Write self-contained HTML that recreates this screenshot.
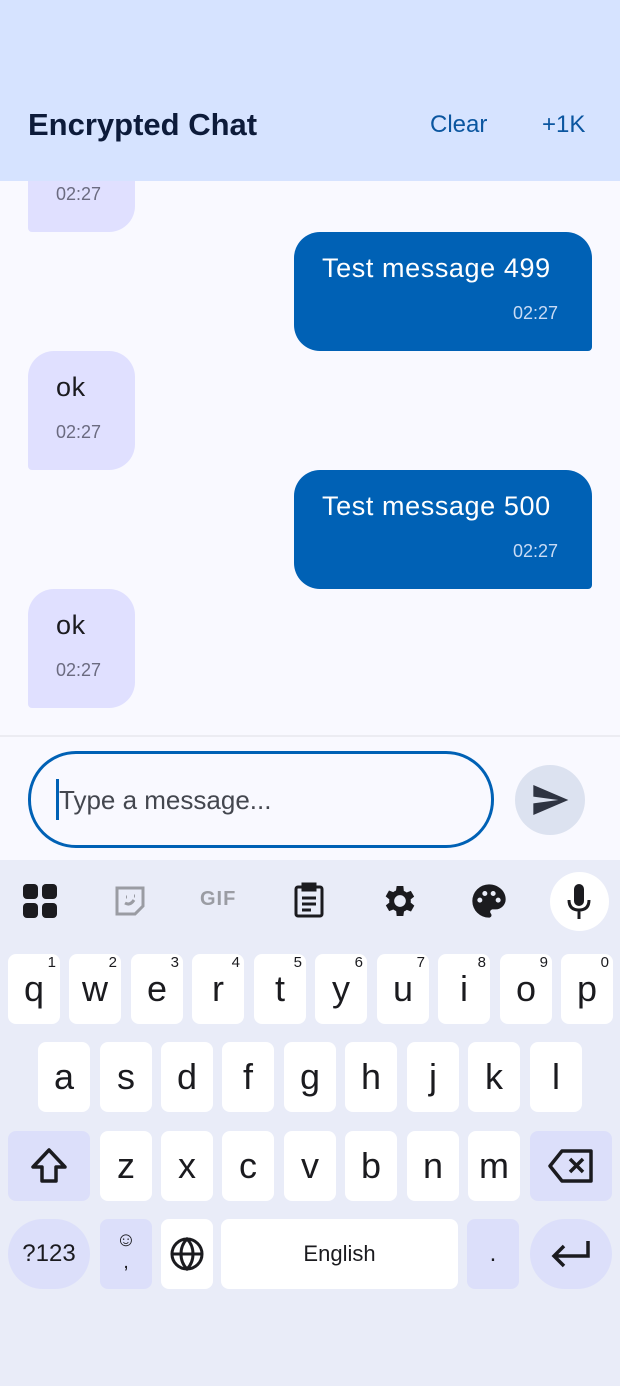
<!DOCTYPE html>
<html><head><meta charset="utf-8"><style>
*{margin:0;padding:0;box-sizing:border-box}
body{width:620px;height:1386px;position:relative;overflow:hidden;background:#f9f9ff;font-family:"Liberation Sans","DejaVu Sans",sans-serif}
.a{position:absolute}
.rb{background:#e0e0ff;border-radius:26px 26px 26px 4px;left:28px;width:107px;height:119px}
.sb{background:#0061b5;border-radius:26px 26px 4px 26px;left:294px;width:298px;height:119px;color:#fff}
.tm{font-size:18px;color:#6b6b80}
.kb{left:0;top:860px;width:620px;height:526px;background:#e9ecf8}
.k{position:absolute;background:#fff;border-radius:8px;height:70px;font-size:36px;color:#1b1b1f;text-align:center;line-height:70px}
.k sup{position:absolute;right:4px;top:-26px;font-size:15px}
.d{background:#dcdffa}
.msg{font-size:27px;letter-spacing:0.6px}
</style></head><body>
<div class="a rb" style="top:113px"></div>
<div class="a tm" style="left:56px;top:184px">02:27</div>
<div class="a" style="left:0;top:0;width:620px;height:181px;background:#d6e3ff"></div>
<div class="a" style="left:28px;top:107px;font-size:31px;font-weight:bold;color:#0d1b3a">Encrypted Chat</div>
<div class="a" style="left:430px;top:111px;font-size:24px;color:#0b56a0">Clear</div>
<div class="a" style="left:542px;top:111px;font-size:24px;color:#0b56a0">+1K</div>

<div class="a sb" style="top:232px"></div>
<div class="a msg" style="left:322px;top:253px;color:#fff">Test message 499</div>
<div class="a" style="left:513px;top:303px;font-size:18px;color:#c8dbf5">02:27</div>
<div class="a rb" style="top:351px"></div>
<div class="a msg" style="left:56px;top:372px;color:#1b1b1f">ok</div>
<div class="a tm" style="left:56px;top:422px">02:27</div>
<div class="a sb" style="top:470px"></div>
<div class="a msg" style="left:322px;top:491px;color:#fff">Test message 500</div>
<div class="a" style="left:513px;top:541px;font-size:18px;color:#c8dbf5">02:27</div>
<div class="a rb" style="top:589px"></div>
<div class="a msg" style="left:56px;top:610px;color:#1b1b1f">ok</div>
<div class="a tm" style="left:56px;top:660px">02:27</div>

<div class="a" style="left:0;top:735px;width:620px;height:125px;background:#f9f9ff;border-top:2px solid #ececf2"></div>
<div class="a" style="left:28px;top:751px;width:466px;height:97px;border:3px solid #0061b5;border-radius:48px"></div>
<div class="a" style="left:56px;top:779px;width:3px;height:41px;background:#0061b5"></div>
<div class="a" style="left:59px;top:785px;font-size:26px;color:#44474f">Type a message...</div>
<div class="a" style="left:515px;top:765px;width:70px;height:70px;border-radius:50%;background:#dce2f0"></div>
<svg class="a" style="left:530px;top:780px" width="40" height="40" viewBox="0 0 24 24"><path d="M2 21l21-9L2 3v7l15 2-15 2z" fill="#2f3442"/></svg>

<div class="a kb"></div>
<svg class="a" style="left:22px;top:883px" width="36" height="36" viewBox="0 0 36 36" fill="#1b1b1f"><rect x="1" y="1" width="15" height="15" rx="4"/><rect x="20" y="1" width="15" height="15" rx="4"/><rect x="1" y="20" width="15" height="15" rx="4"/><rect x="20" y="20" width="15" height="15" rx="4"/></svg>
<svg class="a" style="left:114px;top:885px" width="32" height="32" viewBox="0 0 32 32" fill="none" stroke="#9a9ca3" stroke-width="3"><path d="M3 3h26v18l-8 8H3z"/><path d="M11 18q5 3 9-3M12 12h1M20 11h1"/></svg>
<div class="a" style="left:200px;top:888px;font-size:20px;font-weight:bold;color:#9a9ca3;letter-spacing:1px">GIF</div>
<svg class="a" style="left:293px;top:882px" width="32" height="36" viewBox="0 0 32 36" fill="none" stroke="#1b1b1f" stroke-width="3"><rect x="3" y="5" width="26" height="29" rx="2"/><rect x="10" y="2" width="12" height="6" fill="#1b1b1f"/><path d="M9 16h14M9 22h14M9 28h9"/></svg>
<svg class="a" style="left:380px;top:881px" width="40" height="40" viewBox="0 0 24 24"><path fill="#1b1b1f" d="M19.4 13a7.5 7.5 0 000-2l2.1-1.6-2-3.5-2.5 1a7 7 0 00-1.7-1L15 3h-4l-.4 2.7a7 7 0 00-1.7 1l-2.5-1-2 3.5L6.6 11a7.5 7.5 0 000 2l-2.1 1.6 2 3.5 2.5-1a7 7 0 001.7 1L11 21h4l.4-2.7a7 7 0 001.7-1l2.5 1 2-3.5zM13 15.5a3.5 3.5 0 110-7 3.5 3.5 0 010 7z" transform="translate(-1 0)"/></svg>
<svg class="a" style="left:469px;top:881px" width="40" height="40" viewBox="0 0 24 24"><path fill="#1b1b1f" d="M12 2a10 10 0 000 20c1 0 1.5-.7 1.5-1.5 0-.4-.2-.7-.4-1-.2-.3-.4-.6-.4-1 0-.8.7-1.5 1.5-1.5H16a6 6 0 006-6c0-5-4.5-9-10-9zM6.5 13a1.5 1.5 0 110-3 1.5 1.5 0 010 3zm3-4a1.5 1.5 0 110-3 1.5 1.5 0 010 3zm5 0a1.5 1.5 0 110-3 1.5 1.5 0 010 3zm3 4a1.5 1.5 0 110-3 1.5 1.5 0 010 3z"/></svg>
<div class="a" style="left:550px;top:872px;width:59px;height:59px;border-radius:50%;background:#fff"></div>
<svg class="a" style="left:564px;top:884px" width="30" height="36" viewBox="0 0 30 36"><rect x="10" y="0" width="10" height="22" rx="5" fill="#1b1b1f"/><path d="M5 16q0 10 10 10t10-10M15 26v9" stroke="#1b1b1f" stroke-width="3" fill="none"/></svg>

<div class="k" style="left:8px;top:954px;width:52px">q<sup>1</sup></div>
<div class="k" style="left:69px;top:954px;width:52px">w<sup>2</sup></div>
<div class="k" style="left:131px;top:954px;width:52px">e<sup>3</sup></div>
<div class="k" style="left:192px;top:954px;width:52px">r<sup>4</sup></div>
<div class="k" style="left:254px;top:954px;width:52px">t<sup>5</sup></div>
<div class="k" style="left:315px;top:954px;width:52px">y<sup>6</sup></div>
<div class="k" style="left:377px;top:954px;width:52px">u<sup>7</sup></div>
<div class="k" style="left:438px;top:954px;width:52px">i<sup>8</sup></div>
<div class="k" style="left:500px;top:954px;width:52px">o<sup>9</sup></div>
<div class="k" style="left:561px;top:954px;width:52px">p<sup>0</sup></div>

<div class="k" style="left:38px;top:1042px;width:52px">a</div>
<div class="k" style="left:100px;top:1042px;width:52px">s</div>
<div class="k" style="left:161px;top:1042px;width:52px">d</div>
<div class="k" style="left:222px;top:1042px;width:52px">f</div>
<div class="k" style="left:284px;top:1042px;width:52px">g</div>
<div class="k" style="left:345px;top:1042px;width:52px">h</div>
<div class="k" style="left:407px;top:1042px;width:52px">j</div>
<div class="k" style="left:468px;top:1042px;width:52px">k</div>
<div class="k" style="left:530px;top:1042px;width:52px">l</div>

<div class="k d" style="left:8px;top:1131px;width:82px"><svg style="margin-top:15px" width="40" height="40" viewBox="0 0 40 40" fill="none" stroke="#1b1b1f" stroke-width="3.5" stroke-linejoin="round"><path d="M20 4L4 21h9v14h14V21h9z"/></svg></div>
<div class="k" style="left:100px;top:1131px;width:52px">z</div>
<div class="k" style="left:161px;top:1131px;width:52px">x</div>
<div class="k" style="left:222px;top:1131px;width:52px">c</div>
<div class="k" style="left:284px;top:1131px;width:52px">v</div>
<div class="k" style="left:345px;top:1131px;width:52px">b</div>
<div class="k" style="left:407px;top:1131px;width:52px">n</div>
<div class="k" style="left:468px;top:1131px;width:52px">m</div>
<div class="k d" style="left:530px;top:1131px;width:82px"><svg style="margin-top:17px" width="46" height="36" viewBox="0 0 46 36" fill="none" stroke="#1b1b1f" stroke-width="3.5" stroke-linejoin="round"><path d="M14 3h29v30H14L2 18z"/><path d="M22 11l13 13M35 11L22 24"/></svg></div>

<div class="k d" style="left:8px;top:1219px;width:82px;border-radius:35px;font-size:24px">?123</div>
<div class="k d" style="left:100px;top:1219px;width:52px;font-size:20px;line-height:22px;padding-top:10px">☺<br>,</div>
<div class="k" style="left:161px;top:1219px;width:52px"><svg style="margin-top:17px" width="36" height="36" viewBox="0 0 24 24" fill="none" stroke="#1b1b1f" stroke-width="2"><circle cx="12" cy="12" r="10"/><path d="M2 12h20M12 2c3 3 4 7 4 10s-1 7-4 10c-3-3-4-7-4-10s1-7 4-10z"/></svg></div>
<div class="k" style="left:221px;top:1219px;width:237px;font-size:22px">English</div>
<div class="k d" style="left:467px;top:1219px;width:52px;font-size:24px">.</div>
<div class="k d" style="left:530px;top:1219px;width:82px;border-radius:35px"><svg style="margin-top:20px" width="42" height="30" viewBox="0 0 42 30" fill="none" stroke="#1b1b1f" stroke-width="3.5"><path d="M38 2v15H5M14 7L4 17l10 10"/></svg></div>
</body></html>
